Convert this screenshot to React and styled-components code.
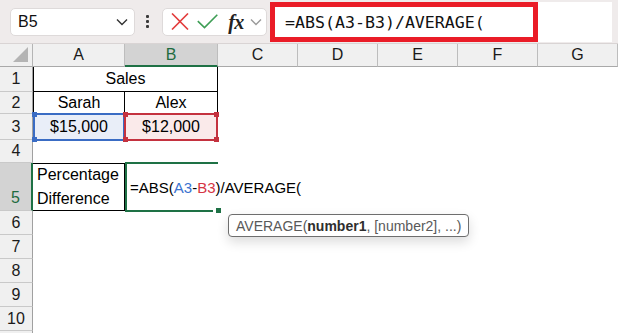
import React from 'react';
import styled, { createGlobalStyle } from 'styled-components';

const GlobalStyle = createGlobalStyle`
  body {
    margin: 0;
    font-family: "Liberation Sans", Arial, sans-serif;
    background: #fff;
    overflow: hidden;
  }
`;

const Page = styled.div`
  width: 618px;
  height: 333px;
  overflow: hidden;
`;

/* ---------- formula bar ---------- */

const Toolbar = styled.div`
  height: 44px;
  box-sizing: border-box;
  background: #efebeb;
  border-bottom: 1px solid #d9d4d4;
  display: flex;
  align-items: center;
  padding-left: 10px;
`;

const NameBox = styled.div`
  width: 125px;
  height: 28px;
  box-sizing: border-box;
  background: #fff;
  border: 1px solid #dedada;
  border-radius: 5px;
  display: flex;
  align-items: center;
  justify-content: space-between;
  padding: 0 6px 0 7px;
  font-size: 16px;
  color: #111;
`;

const Dots = styled.div`
  width: 3px;
  margin: 0 13px 0 11px;
  display: flex;
  flex-direction: column;
  gap: 2px;

  span {
    width: 3px;
    height: 3px;
    border-radius: 1px;
    background: #3a3a3a;
  }
`;

const ActionBox = styled.div`
  width: 105px;
  height: 28px;
  box-sizing: border-box;
  background: #fff;
  border: 1px solid #dedada;
  border-radius: 5px;
  display: flex;
  align-items: center;
  padding: 0 0 0 6px;
`;

const IconSlot = styled.div`
  width: ${p => p.$w}px;
  display: flex;
  align-items: center;
  justify-content: center;
`;

const Fx = styled.span`
  font-family: "Liberation Serif", "Times New Roman", serif;
  font-style: italic;
  font-weight: bold;
  font-size: 20px;
  color: #222;
  letter-spacing: -0.5px;
  line-height: 1;
`;

const FormulaArea = styled.div`
  flex: 1;
  align-self: stretch;
  margin: 2px 6px 1px 3px;
  background: #fff;
  display: flex;
`;

const Highlight = styled.div`
  width: 268px;
  box-sizing: border-box;
  border: 5px solid #ea1c27;
  display: flex;
  align-items: center;
  padding-left: 10px;
  font-family: "DejaVu Sans Mono", "Liberation Mono", monospace;
  font-size: 16.6px;
  color: #111;
  white-space: nowrap;
`;

/* ---------- sheet ---------- */

const Sheet = styled.div`
  position: relative;
  display: grid;
  grid-template-columns: 33px 92px 93px 80px 80px 80px 80px 80px;
  grid-template-rows: 23px 25px 22px 26px 23px 48px 24px 24px 24px 24px 24px 24px;
`;

const Corner = styled.div`
  background: #f0f0f0;
  border-right: 1px solid #b5b5b5;
  border-bottom: 1px solid #a9a9a9;
  box-sizing: border-box;
  position: relative;

  &::after {
    content: '';
    position: absolute;
    right: 4px;
    bottom: 4px;
    width: 0;
    height: 0;
    border-left: 15px solid transparent;
    border-bottom: 15px solid #b4b4b4;
  }
`;

const ColHead = styled.div`
  box-sizing: border-box;
  background: ${p => (p.$active ? '#d3d3d3' : '#f0f0f0')};
  border-right: 1px solid #bdbdbd;
  border-bottom: ${p => (p.$active ? '2px solid #1e7145' : '1px solid #a9a9a9')};
  color: ${p => (p.$active ? '#1e6b40' : '#1a1a1a')};
  font-size: 16px;
  display: flex;
  align-items: center;
  justify-content: center;
  padding-top: ${p => (p.$active ? '1px' : '0')};
`;

const RowHead = styled.div`
  box-sizing: border-box;
  background: ${p => (p.$active ? '#d3d3d3' : '#f0f0f0')};
  border-right: ${p => (p.$active ? '2px solid #1e7145' : '1px solid #a0a0a0')};
  border-bottom: 1px solid #c9c9c9;
  color: ${p => (p.$active ? '#1e6b40' : '#1a1a1a')};
  font-size: 16px;
  display: flex;
  align-items: ${p => (p.$active ? 'flex-end' : 'center')};
  justify-content: center;
  padding-bottom: ${p => (p.$active ? '3px' : '0')};
`;

const line = '1px solid #000';

const Cell = styled.div`
  box-sizing: border-box;
  grid-column: ${p => (p.$span ? `span ${p.$span}` : 'auto')};
  border-top: ${p => (p.$b && p.$b.includes('t') ? line : 'none')};
  border-right: ${p => (p.$b && p.$b.includes('r') ? line : 'none')};
  border-bottom: ${p => (p.$b && p.$b.includes('b') ? line : 'none')};
  border-left: ${p => (p.$b && p.$b.includes('l') ? line : 'none')};
  display: flex;
  align-items: center;
  justify-content: ${p => (p.$left ? 'flex-start' : 'center')};
  padding-left: ${p => (p.$left ? '4px' : '0')};
  font-size: 16px;
  line-height: 24px;
  color: #000;
`;

const RefCell = styled.div`
  position: relative;
  z-index: ${p => p.$z || 1};
  box-sizing: border-box;
  margin: -1px 0 -1px ${p => p.$shift || 0}px;
  background: ${p => p.$fill};
  border: 2px solid ${p => p.$color};
  display: flex;
  align-items: center;
  justify-content: center;
  font-size: 16px;
  color: #000;
`;

const Handle = styled.span`
  position: absolute;
  width: 5px;
  height: 5px;
  background: ${p => p.$color};
  ${p => (p.$top ? 'top: -3px;' : 'bottom: -3px;')}
  ${p => (p.$leftSide ? 'left: -3px;' : 'right: -3px;')}
`;

const ActiveCell = styled.div`
  position: relative;
  z-index: 2;
  box-sizing: border-box;
  margin-top: -1px;
  border-top: 2px solid #1e7145;
  border-left: 2px solid #1e7145;
  display: flex;
  align-items: center;
  padding-left: 3px;
  font-size: 15px;
  color: #000;
  white-space: nowrap;
  overflow: visible;

  &::before {
    content: '';
    position: absolute;
    left: -2px;
    bottom: -1px;
    width: 88px;
    height: 2px;
    background: #1e7145;
  }

  &::after {
    content: '';
    position: absolute;
    left: 89px;
    bottom: -2px;
    width: 5px;
    height: 5px;
    background: #1e7145;
  }
`;

const Ref = styled.span`
  color: ${p => p.$color};
`;

const Caret = styled.span`
  display: inline-block;
  width: 1px;
  height: 19px;
  background: #000;
  margin-left: 1px;
  vertical-align: middle;
`;

const Tooltip = styled.div`
  position: absolute;
  left: 228px;
  top: 170px;
  z-index: 5;
  height: 23px;
  box-sizing: border-box;
  padding: 0 7px;
  display: flex;
  align-items: center;
  background: #fff;
  border: 1px solid #6e6e6e;
  border-radius: 4px;
  box-shadow: 0 5px 12px rgba(0, 0, 0, 0.14);
  font-size: 14px;
  color: #595959;
  white-space: nowrap;

  b {
    color: #2e2e2e;
  }
`;

const Chevron = ({ color = '#333' }) => (
  <svg width="12" height="8" viewBox="0 0 12 8">
    <polyline points="1,1.5 6,6.5 11,1.5" fill="none" stroke={color} strokeWidth="1.4" />
  </svg>
);

const CrossIcon = () => (
  <svg width="18" height="17" viewBox="0 0 18 17">
    <line x1="1" y1="0.5" x2="17" y2="16.5" stroke="#e23a3a" strokeWidth="1.6" />
    <line x1="17" y1="0.5" x2="1" y2="16.5" stroke="#e23a3a" strokeWidth="1.6" />
  </svg>
);

const CheckIcon = () => (
  <svg width="21" height="15" viewBox="0 0 21 15">
    <polyline points="0.8,7.2 7.5,13.6 20.3,0.8" fill="none" stroke="#3e9e55" strokeWidth="1.6" />
  </svg>
);

const cols = ['A', 'B', 'C', 'D', 'E', 'F', 'G'];

const Empty = ({ n }) => Array.from({ length: n }).map((_, i) => <Cell key={i} />);

const App = () => (
  <Page>
    <GlobalStyle />
    <Toolbar>
      <NameBox>
        <span>B5</span>
        <Chevron />
      </NameBox>
      <Dots>
        <span />
        <span />
        <span />
      </Dots>
      <ActionBox>
        <IconSlot $w={22}><CrossIcon /></IconSlot>
        <IconSlot $w={32}><CheckIcon /></IconSlot>
        <IconSlot $w={26}><Fx>fx</Fx></IconSlot>
        <IconSlot $w={14}><Chevron color="#9a9a9a" /></IconSlot>
      </ActionBox>
      <FormulaArea>
        <Highlight>=ABS(A3-B3)/AVERAGE(</Highlight>
      </FormulaArea>
    </Toolbar>

    <Sheet>
      <Corner />
      {cols.map(c => (
        <ColHead key={c} $active={c === 'B'}>{c}</ColHead>
      ))}

      <RowHead>1</RowHead>
      <Cell $span={2} $b="lrb">Sales</Cell>
      <Empty n={5} />

      <RowHead>2</RowHead>
      <Cell $b="lrb">Sarah</Cell>
      <Cell $b="rb">Alex</Cell>
      <Empty n={5} />

      <RowHead>3</RowHead>
      <RefCell $color="#3a6cc4" $fill="#e9eef8">
        $15,000
        <Handle $color="#3a6cc4" $top $leftSide />
        <Handle $color="#3a6cc4" $leftSide />
      </RefCell>
      <RefCell $color="#c4323f" $fill="#faeaea" $shift={-1} $z={2}>
        $12,000
        <Handle $color="#c4323f" $top $leftSide />
        <Handle $color="#c4323f" $leftSide />
        <Handle $color="#c4323f" $top />
        <Handle $color="#c4323f" />
      </RefCell>
      <Empty n={5} />

      <RowHead>4</RowHead>
      <Empty n={7} />

      <RowHead $active>5</RowHead>
      <Cell $b="trb" $left>Percentage<br />Difference</Cell>
      <ActiveCell>
        =ABS(<Ref $color="#3b73cf">A3</Ref>-<Ref $color="#d63545">B3</Ref>)/AVERAGE(
        <Caret />
      </ActiveCell>
      <Empty n={5} />

      {[6, 7, 8, 9, 10].map(n => (
        <React.Fragment key={n}>
          <RowHead>{n}</RowHead>
          <Empty n={7} />
        </React.Fragment>
      ))}
      <RowHead />
      <Empty n={7} />

      <Tooltip>
        AVERAGE(<b>number1</b>, [number2], ...)
      </Tooltip>
    </Sheet>
  </Page>
);

export default App;
